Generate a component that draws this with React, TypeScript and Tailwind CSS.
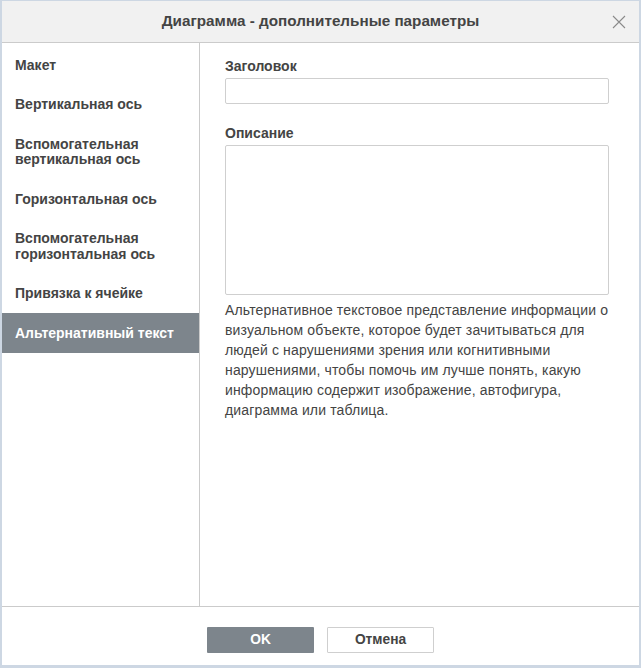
import React, { useState } from 'react';

const sections = [
  ['Макет'],
  ['Вертикальная ось'],
  ['Вспомогательная', 'вертикальная ось'],
  ['Горизонтальная ось'],
  ['Вспомогательная', 'горизонтальная ось'],
  ['Привязка к ячейке'],
  ['Альтернативный текст'],
];

const hintLines = [
  'Альтернативное текстовое представление информации о',
  'визуальном объекте, которое будет зачитываться для',
  'людей с нарушениями зрения или когнитивными',
  'нарушениями, чтобы помочь им лучше понять, какую',
  'информацию содержит изображение, автофигура,',
  'диаграмма или таблица.',
];

const App: React.FC = () => {
  const [active, setActive] = useState(6);
  const [title, setTitle] = useState('');
  const [desc, setDesc] = useState('');

  return (
    <div
      className="w-[641px] h-[668px] flex flex-col bg-white border-x-2 border-t border-b-[3px] border-[#cdd7e3] text-[#444] text-[13.75px]"
      style={{ fontFamily: '"Liberation Sans", Arial, sans-serif' }}
    >
      {/* header */}
      <div className="relative h-[42px] shrink-0 flex items-center justify-center bg-[#f1f1f1] border-b border-[#cbcbcb]">
        <span className="font-bold text-[15.25px]">Диаграмма - дополнительные параметры</span>
        <button type="button" className="absolute right-[13px] top-[14px] w-[14px] h-[14px]" aria-label="Закрыть">
          <svg viewBox="0 0 14 14" width="14" height="14" fill="none" stroke="#8a8a8a" strokeWidth="1.1">
            <path d="M1 1L13 13M13 1L1 13" />
          </svg>
        </button>
      </div>

      {/* body */}
      <div className="flex-1 flex min-h-0">
        <ul className="w-[198px] shrink-0 border-r border-[#cbcbcb] pt-[2px]">
          {sections.map((lines, i) => (
            <li key={i}>
              <button
                type="button"
                onClick={() => setActive(i)}
                className={`w-full text-left pl-[13px] pr-2 pt-[12.5px] pb-[11.5px] leading-[15.5px] text-[14px] font-bold ${
                  i === active ? 'bg-[#7d858c] text-white' : 'text-[#444]'
                }`}
              >
                {lines.map((l) => (
                  <div key={l}>{l}</div>
                ))}
              </button>
            </li>
          ))}
        </ul>

        <div className="flex-1 min-w-0 pl-[25px] pr-[30px] pt-[16px]">
          <div className="font-bold leading-[15px] text-[14px]">Заголовок</div>
          <input
            value={title}
            onChange={(e) => setTitle(e.target.value)}
            className="mt-[4px] block w-full h-[26px] border border-[#cfcfcf] rounded-[2px] px-2 outline-none"
          />
          <div className="mt-[22px] font-bold leading-[15px] text-[14px]">Описание</div>
          <textarea
            value={desc}
            onChange={(e) => setDesc(e.target.value)}
            className="mt-[4px] block w-full h-[150px] border border-[#cfcfcf] rounded-[2px] px-2 py-1 outline-none resize-none"
          />
          {/* line breaks kept as in the original dialog */}
          <p className="mt-[5px] leading-[20px] text-[14px] tracking-[0.15px] whitespace-nowrap">
            {hintLines.map((l, i) => (
              <React.Fragment key={i}>
                {l}
                {i < hintLines.length - 1 && <br />}
              </React.Fragment>
            ))}
          </p>
        </div>
      </div>

      {/* footer */}
      <div className="h-[59px] shrink-0 border-t border-[#cbcbcb] flex items-start justify-center gap-[13px] pt-[20px]">
        <button type="button" className="w-[107px] h-[26px] rounded-[1px] bg-[#7d858c] text-white font-bold">
          OK
        </button>
        <button type="button" className="w-[107px] h-[26px] rounded-[1px] border border-[#cfcfcf] bg-white text-[#444] font-bold">
          Отмена
        </button>
      </div>
    </div>
  );
};

export default App;
